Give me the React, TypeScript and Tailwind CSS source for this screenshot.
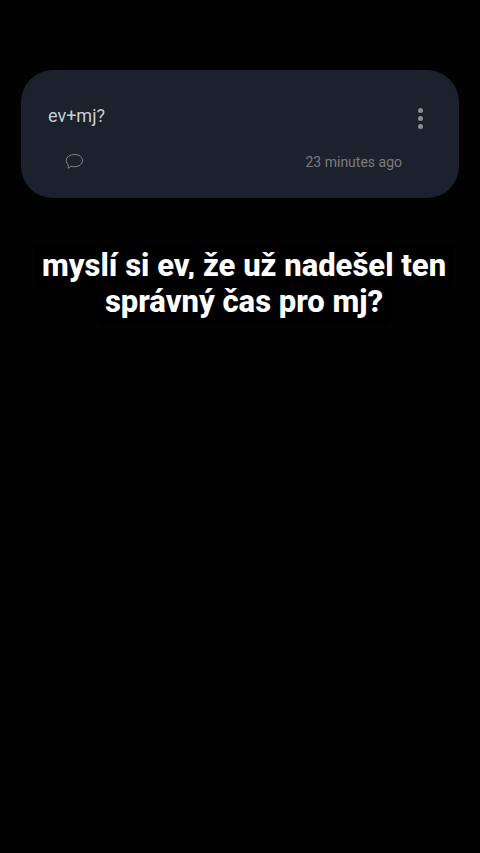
export default function App() {
  return (
    <main className="min-h-screen bg-[#020202] px-[21px] pt-[70px] font-['Roboto',sans-serif]">
      <article className="flex h-32 flex-col rounded-[32px] bg-[#1b222e] pl-[27px] pr-[29px]">
        <div className="flex items-start justify-between pt-[34px]">
          <p className="text-lg leading-6 text-[#c9cfd1]">ev+mj?</p>
          <button type="button" aria-label="More options" className="mt-1 flex w-5 flex-col items-center gap-[3px]">
            <span className="size-[5px] rounded-full bg-[#8b8e92]" />
            <span className="size-[5px] rounded-full bg-[#8b8e92]" />
            <span className="size-[5px] rounded-full bg-[#8b8e92]" />
          </button>
        </div>
        <div className="mt-[23px] flex items-center justify-between pl-4 pr-7">
          <button type="button" aria-label="Comment">
            <svg viewBox="0 0 20 18" className="h-[18px] w-5 fill-none stroke-[#85898e]" strokeLinejoin="round">
              <path d="M10.500 1.500c4.700 0 8 2.500 8 6s-3.300 6.200-8 6.200c-1.300 0-2.500-.2-3.500-.6-.8.900-1.700 1.700-2.700 2.200.2-1.200.1-2.300-.2-3.400C2.900 10.700 2.300 9.200 2.300 7.500c0-3.500 3.500-6 8.200-6z" />
            </svg>
          </button>
          <time className="text-sm leading-5 text-[#7b7c7e]">23 minutes ago</time>
        </div>
      </article>
      <h1 className="mt-[50px] pl-2 text-center text-[31px] font-extrabold leading-9 text-white">
        <span className="rounded-lg bg-black box-decoration-clone px-2 py-1">
          myslí si ev, že už nadešel ten správný čas pro mj?
        </span>
      </h1>
    </main>
  );
}
